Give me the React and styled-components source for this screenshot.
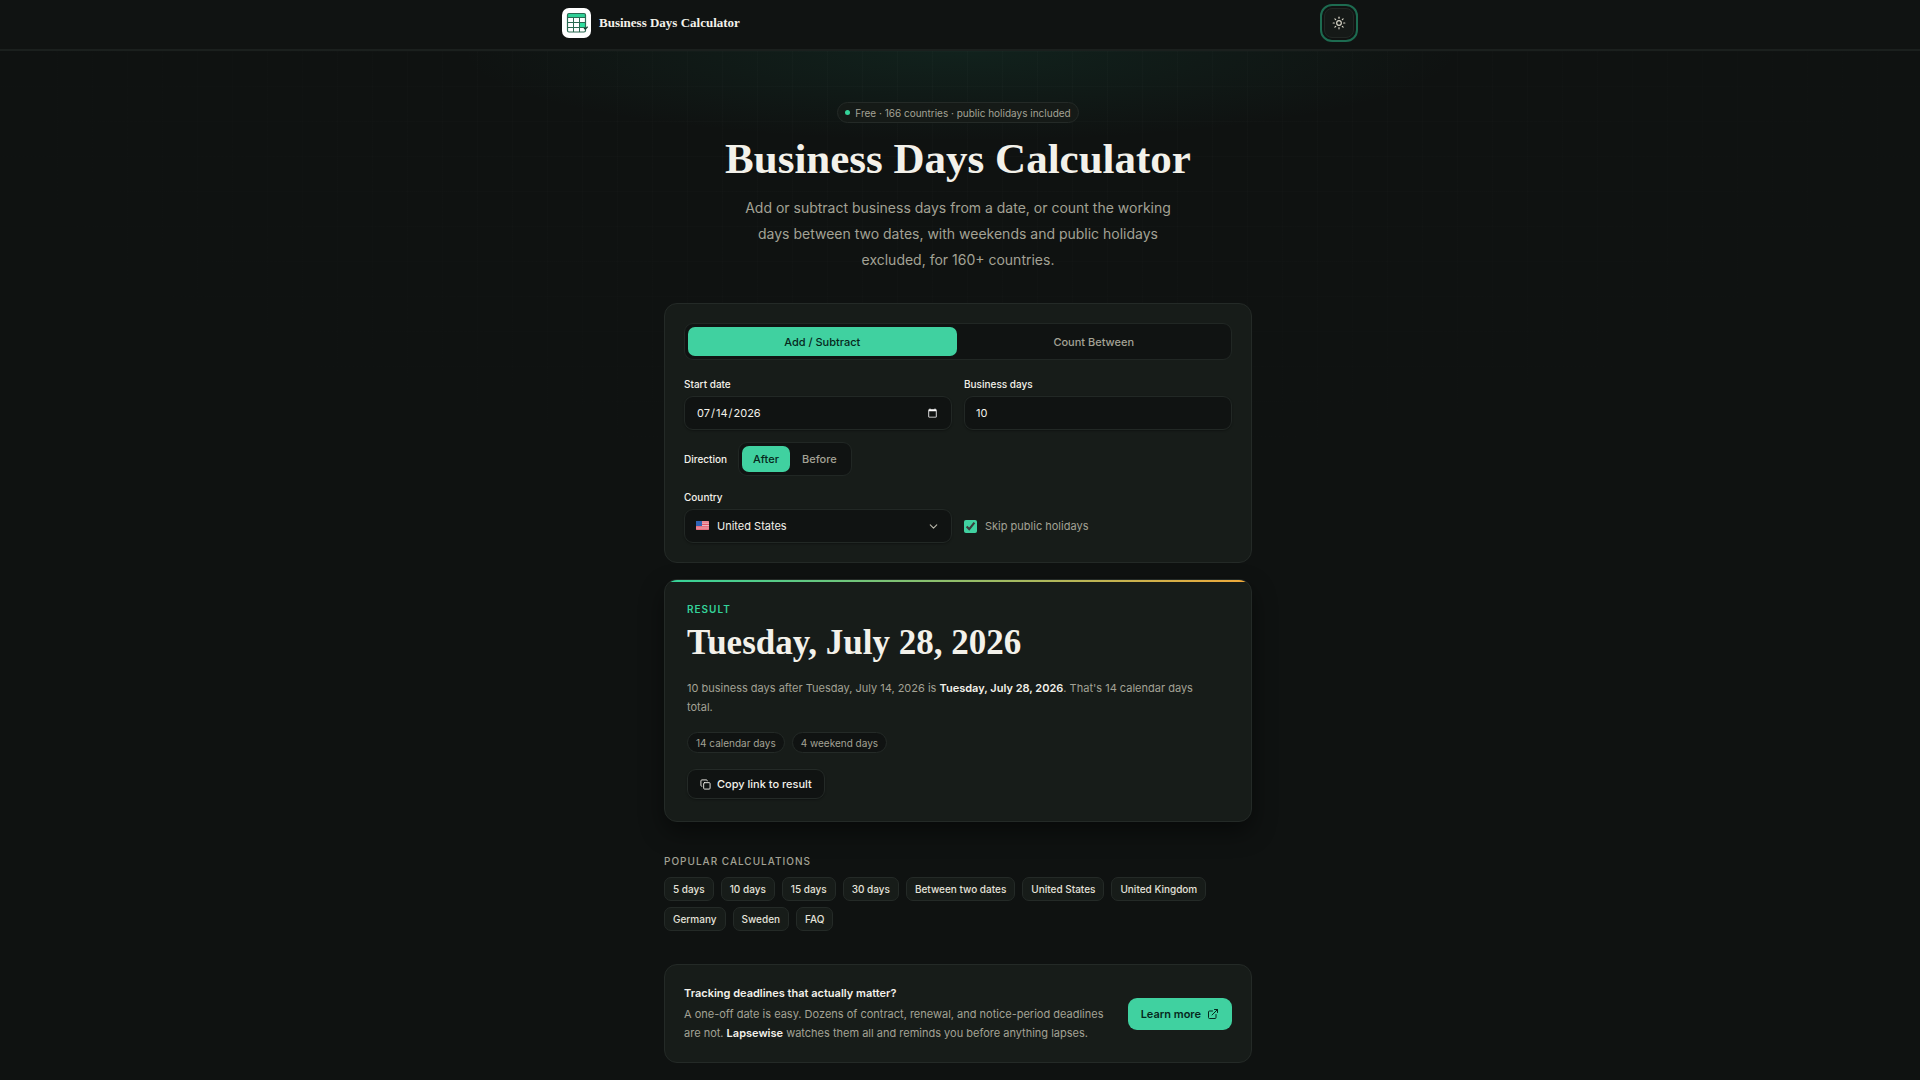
import React, { useState } from "react";
import styled, { createGlobalStyle } from "styled-components";
import { ChevronDown, Copy, ExternalLink, Sun } from "lucide-react";

const popularLinks = [
  "5 days",
  "10 days",
  "15 days",
  "30 days",
  "Between two dates",
  "United States",
  "United Kingdom",
  "Germany",
  "Sweden",
  "FAQ",
];

const countries = ["United States", "United Kingdom", "Germany", "Sweden"];

// Calendar sheet with one highlighted day
const Logo = () => (
  <svg width="22" height="22" viewBox="0 0 22 22" fill="none" aria-hidden="true">
    <rect x="1.5" y="1.5" width="18" height="18.5" rx="1.5" fill="#fff" />
    <path d="M1.5 3a1.5 1.5 0 0 1 1.5-1.5h15a1.5 1.5 0 0 1 1.5 1.5v2.500h-18z" fill="#2fcf96" />
    <rect x="14" y="10.500" width="5.5" height="5" fill="#2fdf9f" />
    <rect x="1.5" y="1.5" width="18" height="18.5" rx="1.5" stroke="#2a6b53" strokeWidth="1.2" />
    <path d="M1.500 5.500h18M1.500 10.500h18M1.500 15.500h18M7.500 5.500v14.500M13.500 5.500v14.500" stroke="#2a6b53" />
    <path d="M18 16l1.300 1.200 2.300-2.500" stroke="#123c2e" strokeWidth="1.2" />
  </svg>
);

const Flag = () => (
  <svg width="13" height="10" viewBox="0 0 13 10" aria-hidden="true">
    <rect width="13" height="9" rx="1" fill="#f0b9c1" />
    <path d="M0 1h13M0 3.400h13M0 5.800h13M0 8.200h13" stroke="#e2566a" strokeWidth="1.200" />
    <rect width="6" height="5" fill="#2f62b4" />
  </svg>
);

const App = () => {
  const [mode, setMode] = useState("add");
  const [direction, setDirection] = useState("after");
  const [startDate, setStartDate] = useState("2026-07-14");
  const [days, setDays] = useState("10");
  const [country, setCountry] = useState("United States");
  const [skipHolidays, setSkipHolidays] = useState(true);

  return (
    <Page>
      <GlobalStyle />

      <Header>
        <HeaderInner>
          <Brand href="#">
            <LogoTile>
              <Logo />
            </LogoTile>
            Business Days Calculator
          </Brand>
          <ThemeButton type="button" aria-label="Switch theme">
            <Sun size={14} strokeWidth={2} />
          </ThemeButton>
        </HeaderInner>
      </Header>

      <Backdrop>
        <Main>
          <Hero>
            <Badge>
              <Dot />
              Free · 166 countries · public holidays included
            </Badge>
            <Title>Business Days Calculator</Title>
            <Lead>
              Add or subtract business days from a date, or count the working
              days between two dates, with weekends and public holidays
              excluded, for 160+ countries.
            </Lead>
          </Hero>

          <FormCard>
            <Tabs>
              <Segment type="button" $active={mode === "add"} onClick={() => setMode("add")}>
                Add / Subtract
              </Segment>
              <Segment type="button" $active={mode === "count"} onClick={() => setMode("count")}>
                Count Between
              </Segment>
            </Tabs>

            <FieldGrid>
              <Field>
                <Label htmlFor="start">Start date</Label>
                <Input
                  id="start"
                  type="date"
                  value={startDate}
                  onChange={(e) => setStartDate(e.target.value)}
                />
              </Field>
              <Field>
                <Label htmlFor="days">Business days</Label>
                <Input
                  id="days"
                  inputMode="numeric"
                  value={days}
                  onChange={(e) => setDays(e.target.value)}
                />
              </Field>
            </FieldGrid>

            <DirectionRow>
              <Legend>Direction</Legend>
              <Toggle>
                <Segment
                  type="button"
                  $small
                  $active={direction === "after"}
                  onClick={() => setDirection("after")}
                >
                  After
                </Segment>
                <Segment
                  type="button"
                  $small
                  $active={direction === "before"}
                  onClick={() => setDirection("before")}
                >
                  Before
                </Segment>
              </Toggle>
            </DirectionRow>

            <FieldGrid $tight>
              <Field>
                <Label htmlFor="country">Country</Label>
                <SelectWrap>
                  <Select
                    id="country"
                    value={country}
                    onChange={(e) => setCountry(e.target.value)}
                  >
                    {countries.map((name) => (
                      <option key={name}>{name}</option>
                    ))}
                  </Select>
                  <SelectFlag>
                    <Flag />
                  </SelectFlag>
                  <SelectArrow>
                    <ChevronDown size={13} strokeWidth={2} />
                  </SelectArrow>
                </SelectWrap>
              </Field>
              <CheckLabel>
                <Checkbox
                  type="checkbox"
                  checked={skipHolidays}
                  onChange={(e) => setSkipHolidays(e.target.checked)}
                />
                Skip public holidays
              </CheckLabel>
            </FieldGrid>
          </FormCard>

          <ResultCard>
            <ResultTag>Result</ResultTag>
            <ResultDate>Tuesday, July 28, 2026</ResultDate>
            <ResultText>
              10 business days after Tuesday, July 14, 2026 is{" "}
              <strong>Tuesday, July 28, 2026</strong>. That's 14 calendar days
              total.
            </ResultText>
            <Stats>
              <Stat>14 calendar days</Stat>
              <Stat>4 weekend days</Stat>
            </Stats>
            <CopyButton type="button">
              <Copy size={11} strokeWidth={2} />
              Copy link to result
            </CopyButton>
          </ResultCard>

          <PopularTitle>Popular calculations</PopularTitle>
          <PopularList>
            {popularLinks.map((text) => (
              <PopularLink key={text} href="#">
                {text}
              </PopularLink>
            ))}
          </PopularList>

          <Promo>
            <div>
              <PromoTitle>Tracking deadlines that actually matter?</PromoTitle>
              <PromoText>
                A one-off date is easy. Dozens of contract, renewal, and
                notice-period deadlines are not. <strong>Lapsewise</strong>{" "}
                watches them all and reminds you before anything lapses.
              </PromoText>
            </div>
            <PromoButton href="#">
              Learn more
              <ExternalLink size={12} strokeWidth={2} />
            </PromoButton>
          </Promo>
        </Main>
      </Backdrop>
    </Page>
  );
};

const GlobalStyle = createGlobalStyle`
  *, *::before, *::after {
    box-sizing: border-box;
  }

  body {
    margin: 0;
    background: #0f1211;
    color: #f3f1ea;
    color-scheme: dark;
    font-family: Inter, "Liberation Sans", sans-serif;
    font-size: 11px;
  }

  h1, h2, h3, p {
    margin: 0;
  }

  button, input, select {
    font: inherit;
    color: inherit;
  }

  strong {
    color: #f3f1ea;
    font-weight: 600;
  }
`;

const Page = styled.div`
  min-height: 100vh;
`;

const Header = styled.header`
  padding: 8px 28px 11px 24px;
  background: #101312;
  border-bottom: 2px solid #1b201e;
`;

const HeaderInner = styled.div`
  display: flex;
  align-items: center;
  justify-content: space-between;
  max-width: 792px;
  margin: 0 auto;
`;

const Brand = styled.a`
  display: flex;
  align-items: center;
  gap: 8px;
  color: #f3f1ea;
  font-family: "Liberation Serif", serif;
  font-size: 13px;
  font-weight: 700;
  text-decoration: none;
`;

const LogoTile = styled.span`
  display: flex;
  align-items: center;
  justify-content: center;
  width: 29px;
  height: 30px;
  border-radius: 7px;
  background: #fff;
`;

const ThemeButton = styled.button`
  display: flex;
  align-items: center;
  justify-content: center;
  width: 30px;
  height: 30px;
  padding: 0;
  border: 1px solid #222724;
  border-radius: 8px;
  outline: 2px solid #1d6b50;
  outline-offset: 2px;
  background: #151917;
  color: #d9d6c8;
`;

const Backdrop = styled.div`
  padding-right: 4px;
  background:
    radial-gradient(ellipse 500px 90px at 50% 0, rgba(30, 130, 100, 0.14), transparent),
    radial-gradient(ellipse 1000px 420px at 50% 0, transparent, #0f1211),
    linear-gradient(90deg, rgba(255, 255, 255, 0.016) 1px, transparent 1px) 22px 0 / 35px 35px,
    linear-gradient(rgba(255, 255, 255, 0.016) 1px, transparent 1px) 0 0 / 35px 35px;
`;

const Main = styled.main`
  max-width: 588px;
  margin: 0 auto;
  padding: 51px 0 16px;
`;

const Hero = styled.section`
  display: flex;
  flex-direction: column;
  align-items: center;
  margin-bottom: 30px;
  text-align: center;
`;

const Badge = styled.span`
  display: flex;
  align-items: center;
  gap: 5px;
  height: 21px;
  padding: 0 7px;
  border: 1px solid #242a27;
  border-radius: 11px;
  background: #151a17;
  color: #a3a295;
  font-size: 10px;
`;

const Dot = styled.span`
  width: 5px;
  height: 5px;
  border-radius: 50%;
  background: #34d399;
`;

const Title = styled.h1`
  margin-top: 12px;
  font-family: "Liberation Serif", serif;
  font-size: 43px;
  font-weight: 700;
  line-height: 48px;
`;

const Lead = styled.p`
  max-width: 460px;
  margin-top: 12px;
  color: #a3a295;
  font-size: 14px;
  line-height: 26px;
`;

const Card = styled.section`
  border: 1px solid #242a27;
  border-radius: 13px;
  background: #171c19;
`;

const FormCard = styled(Card)`
  padding: 19px;
`;

const Tabs = styled.div`
  display: grid;
  grid-template-columns: 1fr 1fr;
  gap: 3px;
  padding: 3px;
  border: 1px solid #212724;
  border-radius: 9px;
  background: #101312;
`;

const Segment = styled.button`
  height: ${({ $small }) => ($small ? 26 : 29)}px;
  padding: 0 11px;
  border: 0;
  border-radius: 7px;
  background: ${({ $active }) => ($active ? "#40d1a0" : "transparent")};
  color: ${({ $active }) => ($active ? "#06281c" : "#a3a295")};
  font-weight: 500;
  cursor: pointer;
`;

const FieldGrid = styled.div`
  display: grid;
  grid-template-columns: 1fr 1fr;
  gap: 12px;
  margin-top: ${({ $tight }) => ($tight ? 13 : 16)}px;
`;

const Field = styled.div`
  display: flex;
  flex-direction: column;
  gap: 4px;
`;

const Label = styled.label`
  font-size: 10px;
  font-weight: 500;
  line-height: 16px;
`;

const Input = styled.input`
  width: 100%;
  height: 34px;
  padding: 0 11px;
  border: 1px solid #222825;
  border-radius: 9px;
  outline: 0;
  background: #101312;
  box-shadow: 0 1px 2px rgba(0, 0, 0, 0.3);
`;

const DirectionRow = styled.div`
  display: flex;
  align-items: center;
  gap: 11px;
  margin-top: 12px;
`;

const Legend = styled.span`
  font-size: 10px;
  font-weight: 500;
`;

const Toggle = styled.div`
  display: flex;
  gap: 1px;
  padding: 3px;
  border: 1px solid #212724;
  border-radius: 9px;
  background: #101312;
`;

const SelectWrap = styled.div`
  position: relative;
`;

const Select = styled.select`
  appearance: none;
  display: block;
  width: 100%;
  height: 34px;
  padding: 0 32px;
  border: 1px solid #222825;
  border-radius: 9px;
  background: #101312;
  box-shadow: 0 1px 2px rgba(0, 0, 0, 0.3);
`;

const SelectFlag = styled.span`
  position: absolute;
  top: 12px;
  left: 12px;
  display: flex;
  pointer-events: none;
`;

const SelectArrow = styled.span`
  position: absolute;
  top: 11px;
  right: 12px;
  display: flex;
  color: #b9b7aa;
  pointer-events: none;
`;

const CheckLabel = styled.label`
  display: flex;
  align-items: center;
  align-self: end;
  gap: 8px;
  height: 34px;
  color: #a3a295;
`;

const Checkbox = styled.input`
  width: 13px;
  height: 13px;
  margin: 0;
  accent-color: #40d1a0;
`;

const ResultCard = styled(Card)`
  position: relative;
  margin-top: 16px;
  padding: 21px 22px 22px;
  overflow: hidden;
  box-shadow: 0 10px 24px rgba(0, 0, 0, 0.45);

  &::before {
    content: "";
    position: absolute;
    top: 0;
    left: 0;
    right: 0;
    height: 2px;
    background: linear-gradient(90deg, #34d399, #f0a93a);
  }
`;

const ResultTag = styled.h2`
  color: #34d399;
  font-size: 10px;
  font-weight: 600;
  letter-spacing: 1px;
  line-height: 16px;
  text-transform: uppercase;
`;

const ResultDate = styled.p`
  margin-top: 6px;
  font-family: "Liberation Serif", serif;
  font-size: 35px;
  font-weight: 700;
  line-height: 40px;
`;

const ResultText = styled.p`
  max-width: 528px;
  margin-top: 16px;
  color: #a3a295;
  line-height: 19px;
`;

const Stats = styled.div`
  display: flex;
  gap: 7px;
  margin-top: 15px;
`;

const Stat = styled.span`
  display: flex;
  align-items: center;
  height: 21px;
  padding: 0 8px;
  border: 1px solid #242a27;
  border-radius: 11px;
  background: #101312;
  color: #a3a295;
  font-size: 10px;
`;

const CopyButton = styled.button`
  display: flex;
  align-items: center;
  gap: 6px;
  height: 30px;
  margin-top: 16px;
  padding: 0 12px;
  border: 1px solid #242a27;
  border-radius: 9px;
  background: #101312;
  box-shadow: 0 1px 2px rgba(0, 0, 0, 0.3);
  font-weight: 500;
  cursor: pointer;
`;

const PopularTitle = styled.h2`
  margin-top: 31px;
  color: #a3a295;
  font-size: 10px;
  font-weight: 500;
  letter-spacing: 1px;
  line-height: 16px;
  text-transform: uppercase;
`;

const PopularList = styled.nav`
  display: flex;
  flex-wrap: wrap;
  gap: 6px 7px;
  margin-top: 8px;
`;

const PopularLink = styled.a`
  display: flex;
  align-items: center;
  height: 24px;
  padding: 0 8px;
  border: 1px solid #242a27;
  border-radius: 7px;
  background: #171c19;
  color: #e4e2d9;
  font-size: 10px;
  font-weight: 500;
  text-decoration: none;
`;

const Promo = styled(Card)`
  display: flex;
  align-items: center;
  justify-content: space-between;
  gap: 16px;
  margin-top: 33px;
  padding: 19px;
`;

const PromoTitle = styled.h3`
  font-size: 11px;
  font-weight: 600;
  line-height: 18px;
`;

const PromoText = styled.p`
  margin-top: 3px;
  color: #a3a295;
  line-height: 19px;
`;

const PromoButton = styled.a`
  display: flex;
  align-items: center;
  flex-shrink: 0;
  gap: 6px;
  height: 32px;
  padding: 0 13px;
  border-radius: 9px;
  background: #40d1a0;
  color: #06281c;
  font-weight: 600;
  text-decoration: none;
`;

export default App;
